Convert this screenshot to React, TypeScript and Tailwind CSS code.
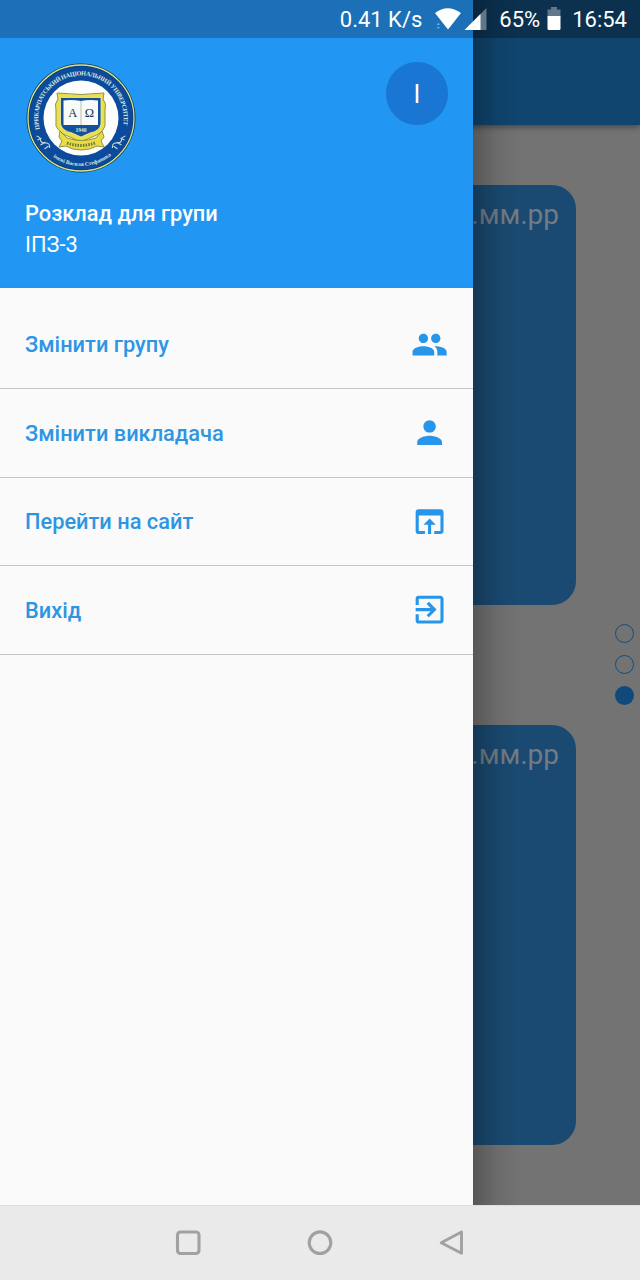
import React from "react";
import { MdPeople, MdPerson, MdOpenInBrowser, MdExitToApp } from "react-icons/md";

const menu = [
  { label: "Змінити групу", Icon: MdPeople },
  { label: "Змінити викладача", Icon: MdPerson },
  { label: "Перейти на сайт", Icon: MdOpenInBrowser },
  { label: "Вихід", Icon: MdExitToApp },
];

function Seal() {
  return (
    <svg viewBox="0 0 110 110" className="h-[110px] w-[110px]">
      <defs>
        <path id="seal-top" d="M14 67 A42.700 42.700 0 1 1 96 67" />
        <path id="seal-bottom" d="M25 92.500 A48 48 0 0 0 85 92.500" />
      </defs>
      <circle cx="55" cy="55" r="54.500" fill="#0c3a5c" />
      <circle cx="55" cy="55" r="53" fill="none" stroke="#d9e58a" strokeWidth="1.300" />
      <circle cx="55" cy="55" r="51.800" fill="#0b4a9c" />
      <circle cx="55" cy="55" r="37.500" fill="#fdfefb" />
      <text fontFamily="Liberation Serif, serif" fontSize="6.200" fontWeight="700" fill="#dcebdc" textLength="152">
        <textPath href="#seal-top" startOffset="1">ПРИКАРПАТСЬКИЙ НАЦІОНАЛЬНИЙ УНІВЕРСИТЕТ</textPath>
      </text>
      <text fontFamily="Liberation Serif, serif" fontSize="5.600" fontWeight="700" fill="#dcebdc">
        <textPath href="#seal-bottom" startOffset="2.500">імені Василя Стефаника</textPath>
      </text>
      <g fill="none" stroke="#c7d9d0" strokeWidth="1.100">
        <path d="M10.500 73 q4 1 4 4 t5 3 t4 5" />
        <path d="M11.500 77 l4 -2 M14.500 82 l5 -3 M18.500 86 l4 -3" />
        <path d="M99.500 73 q-4 1 -4 4 t-5 3 t-4 5" />
        <path d="M98.500 77 l-4 -2 M95.500 82 l-5 -3 M91.500 86 l-4 -3" />
      </g>
      <path d="M31 30 Q55 33 78 30 L77 36 Q81 41 79 47 L79 63 Q76 71 66 74 L55 79 L44 74 Q34 71 30 63 L30 47 Q28 41 32 36 Z" fill="#ece04a" stroke="#8f9340" strokeWidth="1" />
      <path d="M34.500 34.500 H75 V61 Q74 68 64 70 L55 74 L46 70 Q36 68 34.500 61 Z" fill="#14509b" stroke="#f5f0a0" strokeWidth="0.800" />
      <path d="M37.500 37.500 Q46 36.500 55 38 Q63 36.500 72 37.500 V62 H37.500 Z" fill="#f8fbf8" />
      <path d="M55 38 V62" stroke="#b8b99a" strokeWidth="0.900" />
      <text x="46.800" y="53.500" textAnchor="middle" fontFamily="Liberation Serif, serif" fontSize="12.500" fill="#15334f">Α</text>
      <text x="63.300" y="53.500" textAnchor="middle" fontFamily="Liberation Serif, serif" fontSize="12.500" fill="#15334f">Ω</text>
      <text x="55" y="69" textAnchor="middle" fontFamily="Liberation Serif, serif" fontSize="5.500" fontWeight="700" fill="#e4e6c8">1940</text>
      <path d="M34 68 L41 75 Q55 80 70 75 L76 68 L78 74 L75 78 L78 84 L71 83 Q64 87 55 87 Q46 87 40 83 L33 84 L36 78 L33 74 Z" fill="#e9dc45" stroke="#85893c" strokeWidth="0.900" />
      <path d="M41 80 Q55 85 69 80" fill="none" stroke="#6e763b" strokeWidth="3" strokeDasharray="1.500 1.200" />
    </svg>
  );
}

function StatusBar() {
  return (
    <div className="absolute inset-x-0 top-0 z-30 h-[38px] text-white">
      <div className="flex h-full items-center justify-end pr-[13px] text-[22px] leading-none">
        <span className="mt-[2px]">0.41 K/s</span>
        <svg viewBox="0 0 54 38" className="ml-[12px] h-[38px] w-[54px]">
          <path d="M1 13 Q13.500 3.500 27 13 L14 29.500 Z" fill="#fff" />
          <path d="M2.500 25 L4.500 22.500 L6 25 Z M2.500 27 H6 L4.500 29 Z" fill="#53adf4" />
          <path d="M52.500 8 V30 H30.500 Z" fill="#607789" />
          <path d="M46.500 14 V30 H30.500 Z" fill="#fff" />
        </svg>
        <span className="ml-[11px] mt-[2px]">65%</span>
        <svg viewBox="0 0 14 24" className="ml-[7px] h-6 w-[14px]">
          <path d="M0.500 2.500 H4 V0 H10 V2.500 H13.500 V10 H0.500 Z" fill="#627789" />
          <path d="M0.500 9 H13.500 V21.500 Q13.500 23 12 23 H2 Q0.500 23 0.500 21.500 Z" fill="#fff" />
        </svg>
        <span className="ml-[11px] mt-[2px]">16:54</span>
      </div>
    </div>
  );
}

function DateCard() {
  return (
    <div className="h-[420px] w-[512px] rounded-[24px] bg-[#1a4a72] pr-[17px] pt-[13px] text-right text-[28px] leading-[34px] text-[#737c84]">
      дд.мм.рр
    </div>
  );
}

function SchedulePage() {
  return (
    <div className="flex h-[1205px] flex-col bg-[#737373]">
      <div className="z-[1] h-[125px] shrink-0 bg-[#10456f] shadow-[0_2px_6px_rgba(0,0,0,0.4)]">
        <div className="h-[38px] bg-[#0b314f]" />
      </div>
      <div className="flex flex-1 justify-between pl-16">
        <div className="flex flex-col gap-[120px] pt-[60px]">
          <DateCard />
          <DateCard />
        </div>
        <div className="flex flex-col gap-3 pr-[6px] pt-[499px]">
          <span className="h-[19px] w-[19px] rounded-full border-[1.5px] border-[#164c7a]" />
          <span className="h-[19px] w-[19px] rounded-full border-[1.5px] border-[#164c7a]" />
          <span className="h-[19px] w-[19px] rounded-full bg-[#10497c]" />
        </div>
      </div>
    </div>
  );
}

function Drawer() {
  return (
    <aside className="absolute left-0 top-0 z-20 flex h-[1205px] w-[473px] flex-col bg-[#fafafa]">
      <div className="h-[38px] shrink-0 bg-[#1b70b7]" />
      <header className="flex h-[250px] shrink-0 flex-col border-b border-[#3c8ccd] bg-[#2196f3] pl-[25px] pr-[25px] pt-[25px] text-[21.8px] text-white">
        <div className="flex items-start justify-between">
          <div className="pl-px">
            <Seal />
          </div>
          <div className="-mt-px flex h-[63px] w-[62px] items-center justify-center rounded-full bg-[#1976d2] pt-[2px] text-[25px]">
            І
          </div>
        </div>
        <div className="mt-[25px] font-medium leading-[31px]">Розклад для групи</div>
        <div className="leading-[31px]">ІПЗ-3</div>
      </header>
      <nav className="pt-[12.5px]">
        {menu.map(({ label, Icon }) => (
          <div
            key={label}
            className="flex h-[88.600px] items-center justify-between border-b border-[#c6c6c6] pl-[25px] pr-[25px] text-[21.8px] font-medium text-[#2d96e3]"
          >
            <span className="pt-[2px]">{label}</span>
            <Icon className="h-[37.200px] w-[37.200px] text-[#2795e9]" />
          </div>
        ))}
      </nav>
    </aside>
  );
}

function NavigationBar() {
  return (
    <div className="flex h-[75px] items-center justify-center gap-[104px] border-t border-[#dedede] bg-[#eaeaea] text-[#a1a1a1]">
      <svg viewBox="0 0 28 28" className="h-7 w-7" fill="none" stroke="currentColor" strokeWidth="3.100">
        <rect x="3.500" y="3" width="21.500" height="21.500" rx="3" />
      </svg>
      <svg viewBox="0 0 28 28" className="h-7 w-7" fill="none" stroke="currentColor" strokeWidth="3.100">
        <circle cx="14" cy="13.700" r="10.800" />
      </svg>
      <svg viewBox="0 0 28 28" className="h-7 w-7" fill="none" stroke="currentColor" strokeWidth="2.900" strokeLinejoin="round">
        <path d="M3.200 13.700 L23.500 3 V24.300 Z" />
      </svg>
    </div>
  );
}

export default function App() {
  return (
    <div className="relative h-[1280px] w-[640px] overflow-hidden font-['Roboto',sans-serif]">
      <SchedulePage />
      <div className="absolute left-[473px] top-0 z-10 h-[1205px] w-[46px] bg-gradient-to-r from-black/25 via-black/8 to-transparent" />
      <Drawer />
      <StatusBar />
      <NavigationBar />
    </div>
  );
}
